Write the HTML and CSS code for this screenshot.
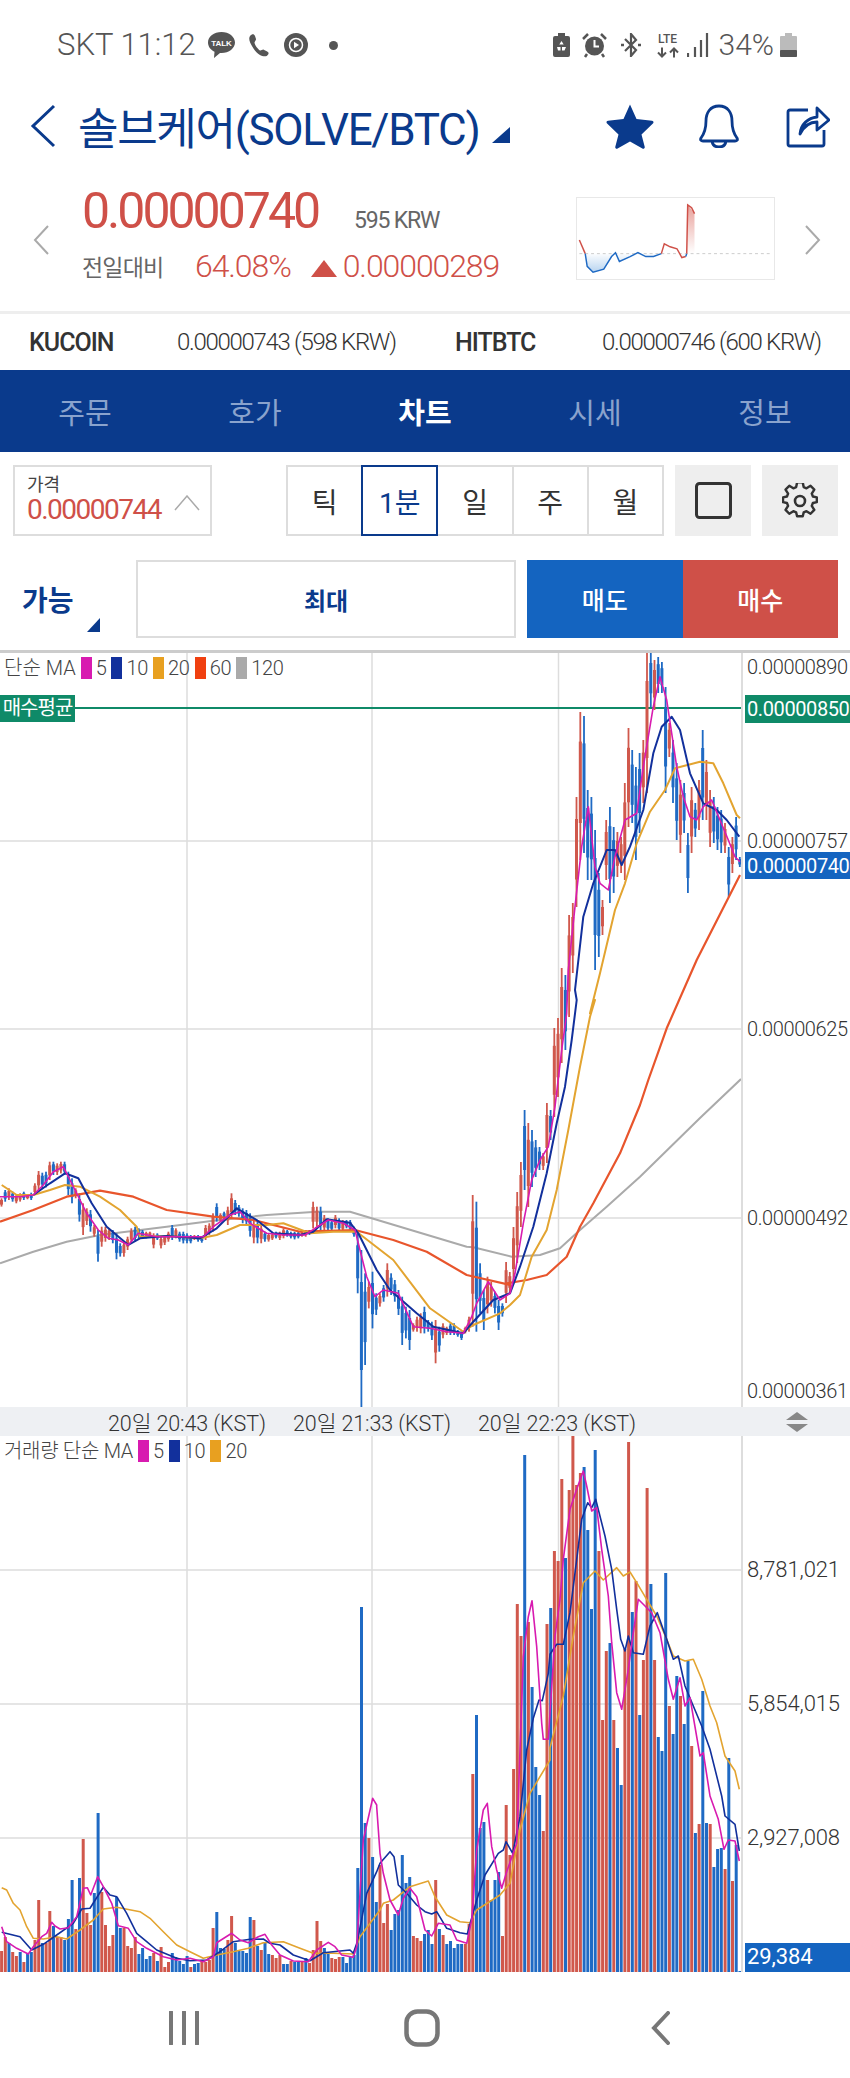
FILE: index.html
```html
<!DOCTYPE html>
<html lang="ko">
<head>
    <meta charset="UTF-8">
    <meta name="viewport" content="width=device-width, initial-scale=1.0">
    <title>솔브케어 차트</title>
    <link rel="stylesheet" href="styles.css">
</head>
<body>
    <div class="status-bar">
        <div class="status-left">
            <span class="status-text">SKT 11:12</span>
            <svg class="ic-talk" viewBox="0 0 27 26"><path d="M13.5 0C6 0 0 4.500 0 10.500c0 4 2.600 7.400 6.500 9.200L6 26l6-5.100c.5 0 1 .1 1.500.1C21 21 27 16.300 27 10.500S21 0 13.500 0z" fill="#555"/><text x="13.500" y="14" class="talk-label">TALK</text></svg>
            <svg class="ic-phone" viewBox="0 0 22 24"><path d="M2 3c2-2.500 4-2.500 5 0l1 3c.4 1.200-1.500 2.500-1.500 3.500 0 2 3.500 7 5.500 8 1 .5 2.500-1.300 3.700-.8l3.500 1.800c2 1 1.800 3-.5 4.500C16 24 10 23 5.500 15.500 1 9 .5 5 2 3z" fill="#555"/></svg>
            <svg class="ic-play" viewBox="0 0 24 24"><circle cx="12" cy="12" r="12" fill="#555"/><circle cx="12" cy="12" r="6.500" fill="none" stroke="#fff" stroke-width="1.500"/><path d="M10 8.800l5 3.200-5 3.200z" fill="#fff"/></svg>
            <span class="status-dot"></span>
        </div>
        <div class="status-right">
            <svg class="ic-batt-save" viewBox="0 0 17 24"><path d="M5 0h7v3h3a2 2 0 0 1 2 2v17a2 2 0 0 1-2 2H2a2 2 0 0 1-2-2V5a2 2 0 0 1 2-2h3z" fill="#555"/><path d="M8.500 8l2.200 3.500h-4.400zM4 14h3.500v3.500H5zM13 14l-1.500 3.500H9V14z" fill="#fff"/></svg>
            <svg class="ic-alarm" viewBox="0 0 25 25"><circle cx="12.500" cy="13" r="9.500" fill="#555"/><path d="M12.500 7v6.500H17" fill="none" stroke="#fff" stroke-width="2"/><path d="M1 6l5-5M24 6l-5-5M5 21l-2 3M20 21l2 3" stroke="#555" stroke-width="2.500"/></svg>
            <svg class="ic-bt" viewBox="0 0 22 24"><path d="M5 6l11 11-5 6V1l5 6L5 18" fill="none" stroke="#555" stroke-width="2.200"/><path d="M1 12h3M18 12h3" stroke="#555" stroke-width="2.500"/></svg>
            <div class="lte">
                <span class="lte-label">LTE</span>
                <svg class="ic-arrows" viewBox="0 0 24 10"><path d="M6 0v9M2 5l4 4 4-4M18 10V1M14 5l4-4 4 4" fill="none" stroke="#555" stroke-width="2"/></svg>
            </div>
            <svg class="ic-signal" viewBox="0 0 22 24"><path d="M1 20v4M8 14v10M14 7v17M20 0v24" stroke="#555" stroke-width="2.200"/></svg>
            <span class="status-text">34%</span>
            <svg class="ic-battery" viewBox="0 0 17 24"><path d="M5 0h7v3h4a1 1 0 0 1 1 1v19a1 1 0 0 1-1 1H1a1 1 0 0 1-1-1V4a1 1 0 0 1 1-1h4z" fill="#bbb"/><rect y="17" width="17" height="7" rx="1" fill="#555"/></svg>
        </div>
    </div>

    <header class="title-row">
        <svg class="back-arrow" viewBox="0 0 26 44"><path d="M24 2L3 22l21 20" fill="none" stroke="#0a3a8c" stroke-width="3"/></svg>
        <h1 class="coin-name">솔브케어(SOLVE/BTC)</h1>
        <span class="corner-tri title-tri"></span>
        <svg class="ic-star" viewBox="0 0 48 46"><path d="M24 1.500l6.500 14.500 15.500 1.800c1.500.2 2 1.800.9 2.800L35.500 31.500l3.200 12.200c.4 1.500-1 2.500-2.300 1.800L24 38.500l-12.400 7c-1.300.7-2.700-.3-2.300-1.800l3.200-12.200L1.100 20.600c-1.100-1-.6-2.600.9-2.800L17.500 16z" fill="#0a3a8c"/></svg>
        <svg class="ic-bell" viewBox="0 0 42 44"><path d="M21 2C12 2 8 9 8 17c0 9-2 13-5 17-1 2 0 3 2 3h32c2 0 3-1 2-3-3-4-5-8-5-17 0-8-4-15-13-15zM14 37c.5 4 3.500 6 7 6s6.500-2 7-6" fill="none" stroke="#0a3a8c" stroke-width="2.800"/></svg>
        <svg class="ic-share" viewBox="0 0 44 44"><path d="M22 6H4a2 2 0 0 0-2 2v32a2 2 0 0 0 2 2h32a2 2 0 0 0 2-2V26" fill="none" stroke="#0a3a8c" stroke-width="2.800"/><path d="M14 30c1-10 8-16 17-17V4l12 12-12 10v-8c-7 0-13 4-17 12z" fill="#fff" stroke="#0a3a8c" stroke-width="2.800" stroke-linejoin="round"/></svg>
    </header>

    <section class="quote">
        <svg class="side-arrow" viewBox="0 0 16 30"><path d="M15 1L2 15l13 14" fill="none" stroke="#aaa" stroke-width="2"/></svg>
        <div class="quote-main">
            <div class="quote-top">
                <span class="last-price">0.00000740</span>
                <span class="krw">595 KRW</span>
            </div>
            <div class="quote-bottom">
                <span class="change-label">전일대비</span>
                <span class="change-rate">64.08%</span>
                <span class="up-tri"></span>
                <span class="change-amount">0.00000289</span>
            </div>
        </div>
        <svg class="spark" viewBox="576 197 199 83">
            <defs>
                <linearGradient id="sparkRed" x1="0" y1="0" x2="0" y2="1"><stop offset="0" stop-color="#e8a09a"/><stop offset="1" stop-color="#fff"/></linearGradient>
                <linearGradient id="sparkBlue" x1="0" y1="1" x2="0" y2="0"><stop offset="0" stop-color="#b8d4f0"/><stop offset="1" stop-color="#fff"/></linearGradient>
            </defs>
            <path d="M583 254L585 267 591 273 602 270 610 257 614 253 618 262 629 257 637 253 645 257 653 257 661 254 682 254 682 258 686 257 687 254z" fill="url(#sparkBlue)"/>
            <path d="M687 254L688 204 695 213 695 254z" fill="url(#sparkRed)"/>
            <path d="M577 254H775" stroke="#ccc" stroke-dasharray="3 3"/>
            <path d="M577 240L583 254" fill="none" stroke="#cf5048" stroke-width="1.500"/>
            <path d="M583 254L585 267 591 273 602 270 610 257 614 253 618 262 629 257 637 253 645 257 653 257 661 254" fill="none" stroke="#1f6ac4" stroke-width="1.500"/>
            <path d="M661 254L664 244 670 247 677 249 682 258 686 257" fill="none" stroke="#cf5048" stroke-width="1.500"/>
            <path d="M686 257L687 254" fill="none" stroke="#1f6ac4" stroke-width="1.500"/>
            <path d="M687 254L688 204 692 207 695 213" fill="none" stroke="#cf5048" stroke-width="1.500"/>
        </svg>
        <svg class="side-arrow side-next" viewBox="0 0 16 30"><path d="M1 1l13 14L1 29" fill="none" stroke="#aaa" stroke-width="2"/></svg>
    </section>

    <section class="exchanges">
        <strong class="ex-name">KUCOIN</strong>
        <span class="ex-price">0.00000743 (598 KRW)</span>
        <strong class="ex-name">HITBTC</strong>
        <span class="ex-price">0.00000746 (600 KRW)</span>
    </section>

    <nav class="tabs">
        <span class="tab">주문</span>
        <span class="tab">호가</span>
        <span class="tab active">차트</span>
        <span class="tab">시세</span>
        <span class="tab">정보</span>
    </nav>

    <section class="controls">
        <div class="price-box">
            <div>
                <div class="price-label">가격</div>
                <div class="price-value">0.00000744</div>
            </div>
            <svg class="ic-up" viewBox="0 0 26 16"><path d="M1 15L13 1l12 14" fill="none" stroke="#aaa" stroke-width="1.500"/></svg>
        </div>
        <div class="periods">
            <span class="period">틱</span>
            <span class="period selected">1분</span>
            <span class="period">일</span>
            <span class="period">주</span>
            <span class="period">월</span>
        </div>
        <div class="icon-btn">
            <svg class="ic-square" viewBox="0 0 37 37"><rect x="1.500" y="1.500" width="34" height="34" rx="3" fill="none" stroke="#333" stroke-width="3"/></svg>
        </div>
        <div class="icon-btn">
            <svg class="ic-gear" viewBox="0 0 36 36"><path d="M15 2h6l1 5 3 1.300 4.300-2.700 4 4.200L30.600 14l1.200 3 4.200 1v5l-4.200 1-1.200 3 2.700 4.200-4 4.200-4.300-2.700-3 1.300-1 4h-6l-1-4-3-1.300-4.300 2.700-4-4.200L5.400 27l-1.200-3L0 23v-5l4.200-1 1.200-3-2.700-4.200 4-4.200L11 8.300 14 7z" transform="translate(1 -2.500) scale(.94)" fill="none" stroke="#333" stroke-width="2.600" stroke-linejoin="round"/><circle cx="18" cy="18" r="5" fill="none" stroke="#333" stroke-width="2.600"/></svg>
        </div>
    </section>

    <section class="order-row">
        <div class="avail">가능<span class="corner-tri avail-tri"></span></div>
        <div class="max-btn">최대</div>
        <div class="side-btns">
            <span class="side-btn sell">매도</span>
            <span class="side-btn buy">매수</span>
        </div>
    </section>

    <section class="chart price-chart">
        <svg id="priceSvg" class="chart-svg" viewBox="0 653 741 754"></svg>
        <div class="legend">
            <span class="legend-name">단순 MA</span>
            <i class="swatch c5"></i><span>5</span>
            <i class="swatch c10"></i><span>10</span>
            <i class="swatch c20"></i><span>20</span>
            <i class="swatch c60"></i><span>60</span>
            <i class="swatch c120"></i><span>120</span>
        </div>
        <span class="avg-tag">매수평균</span>
        <div class="axis-line"></div>
        <span class="axis-label p890">0.00000890</span>
        <span class="axis-label axis-box green p850">0.00000850</span>
        <span class="axis-label p757">0.00000757</span>
        <span class="axis-label axis-box blue p740">0.00000740</span>
        <span class="axis-label p625">0.00000625</span>
        <span class="axis-label p492">0.00000492</span>
        <span class="axis-label p361">0.00000361</span>
    </section>

    <div class="time-axis">
        <span class="time-label">20일 20:43 (KST)</span>
        <span class="time-label">20일 21:33 (KST)</span>
        <span class="time-label">20일 22:23 (KST)</span>
        <svg class="ic-resize" viewBox="0 0 24 20"><path d="M12 0l11 8H1zM1 12h22l-11 8z" fill="#888"/></svg>
    </div>

    <section class="chart volume-chart">
        <svg id="volumeSvg" class="chart-svg" viewBox="0 1436 741 536"></svg>
        <div class="legend legend-vol">
            <span class="legend-name">거래량 단순 MA</span>
            <i class="swatch c5"></i><span>5</span>
            <i class="swatch c10"></i><span>10</span>
            <i class="swatch c20"></i><span>20</span>
        </div>
        <div class="axis-line"></div>
        <span class="axis-label vol-label v1">8,781,021</span>
        <span class="axis-label vol-label v2">5,854,015</span>
        <span class="axis-label vol-label v3">2,927,008</span>
        <span class="axis-label vol-label axis-box blue v4">29,384</span>
    </section>

    <div class="nav-bar">
        <svg class="ic-recent" viewBox="0 0 32 34"><path d="M3 1v32M16 1v32M29 1v32" stroke="#777" stroke-width="4" stroke-linecap="round"/></svg>
        <svg class="ic-home" viewBox="0 0 36 38"><rect x="2.500" y="2.500" width="31" height="33" rx="11" fill="none" stroke="#777" stroke-width="4.500"/></svg>
        <svg class="ic-back" viewBox="0 0 19 34"><path d="M17 2L3 17l14 15" fill="none" stroke="#777" stroke-width="4" stroke-linecap="round"/></svg>
    </div>

    <script src="chart.js"></script>
</body>
</html>
```

FILE: styles.css
```css
* {
    box-sizing: border-box;
}

body {
    font-family: Roboto, "Noto Sans CJK KR", sans-serif;
    background-color: #fff;
    color: #333;
    margin: 0;
    padding: 0;
    width: 850px;
    height: 2078px;
    overflow: hidden;
}

/* status bar */
.status-bar {
    height: 80px;
    padding: 32px 53px 0 57px;
    display: flex;
    justify-content: space-between;
    align-items: flex-start;
}

.status-left, .status-right {
    display: flex;
    align-items: center;
    height: 26px;
}

.status-text {
    font-size: 31px;
    font-weight: 300;
    color: #555;
    line-height: 26px;
    white-space: nowrap;
}

.ic-talk { width: 27px; height: 26px; margin-left: 12px; }
.talk-label { font: bold 8px "Liberation Sans", sans-serif; fill: #fff; text-anchor: middle; }
.ic-phone { width: 22px; height: 24px; margin-left: 13px; }
.ic-play { width: 24px; height: 24px; margin-left: 14px; }
.status-dot { width: 9px; height: 9px; border-radius: 50%; background: #555; margin-left: 21px; }
.ic-batt-save { width: 17px; height: 24px; }
.ic-alarm { width: 25px; height: 25px; margin-left: 12px; }
.ic-bt { width: 22px; height: 24px; margin-left: 13px; }
.lte { width: 24px; margin-left: 14px; display: flex; flex-direction: column; align-items: center; }
.lte-label { font-size: 12px; font-weight: 500; color: #555; line-height: 12px; }
.ic-arrows { width: 24px; height: 11px; margin-top: 2px; }
.ic-signal { width: 22px; height: 24px; margin-left: 7px; }
.status-right .status-text { margin-left: 10px; font-size: 30px; }
.ic-battery { width: 17px; height: 24px; margin-left: 6px; }

/* title */
.title-row {
    height: 92px;
    position: relative;
    display: flex;
    align-items: center;
    padding-left: 30px;
}

.back-arrow { width: 26px; height: 44px; }

.coin-name {
    margin: 0 0 0 22px;
    font-size: 44px;
    font-weight: 400;
    color: #0a3a8c;
    letter-spacing: -1.3px;
    white-space: nowrap;
}

.corner-tri {
    width: 0;
    height: 0;
    display: block;
    border-style: solid;
    border-width: 0 0 16px 18px;
    border-color: transparent transparent #0a3a8c transparent;
}

.title-tri { margin: 18px 0 0 13px; }
.ic-star { width: 48px; height: 46px; margin-left: 96px; }
.ic-bell { width: 42px; height: 44px; margin-left: 44px; }
.ic-share { width: 44px; height: 44px; margin-left: 46px; }

/* quote */
.quote {
    height: 142px;
    border-bottom: 3px solid #eee;
    display: flex;
    align-items: flex-start;
    padding-left: 33px;
    position: relative;
}

.side-arrow { width: 16px; height: 30px; margin-top: 53px; flex: none; }
.side-next { margin-left: 30px; }

.quote-main {
    width: 494px;
    margin-left: 33px;
    padding-top: 12px;
}

.quote-top { display: flex; align-items: baseline; height: 55px; }

.last-price {
    font-size: 50px;
    font-weight: 400;
    color: #cf5048;
    letter-spacing: -3px;
    line-height: 55px;
}

.krw {
    font-size: 23px;
    color: #666;
    margin-left: 36px;
    letter-spacing: -1.2px;
}

.quote-bottom { display: flex; align-items: center; height: 42px; margin-top: 6px; }
.change-label { font-size: 23px; color: #666; letter-spacing: -.8px; width: 113px; white-space: nowrap; }

.change-rate, .change-amount {
    font-size: 32px;
    font-weight: 300;
    color: #cf5048;
    letter-spacing: -1.1px;
}

.up-tri {
    width: 0;
    height: 0;
    margin: 4px 6px 0 20px;
    border-style: solid;
    border-width: 0 13.500px 17px 13.500px;
    border-color: transparent transparent #cf5048 transparent;
}

.spark {
    width: 199px;
    height: 83px;
    margin-top: 25px;
    border: 1px solid #e8e8e8;
    flex: none;
}

/* exchange prices */
.exchanges {
    height: 56px;
    display: grid;
    grid-template-columns: 148px 278px 147px 1fr;
    align-items: center;
    padding: 0 0 0 29px;
}

.ex-name { font-size: 25px; font-weight: 500; color: #333; letter-spacing: -1px; }
.ex-price { font-size: 24px; font-weight: 300; color: #333; letter-spacing: -1.300px; white-space: nowrap; }

/* tabs */
.tabs {
    height: 82px;
    background-color: #0a3a8c;
    display: grid;
    grid-template-columns: repeat(5, 170px);
    align-items: center;
}

.tab { text-align: center; font-size: 29px; color: #8aa3cd; }
.tab.active { color: #fff; font-weight: 700; }

/* price box and period buttons */
.controls {
    display: flex;
    height: 71px;
    margin-top: 13px;
    padding-left: 13px;
}

.price-box {
    width: 199px;
    border: 2px solid #ddd;
    padding: 8px 10px 0 12px;
    display: flex;
    justify-content: space-between;
    align-items: flex-start;
}

.price-label { font-size: 18px; line-height: 20px; color: #444; }
.price-value { font-size: 28px; line-height: 30px; color: #cf5048; letter-spacing: -1.500px; white-space: nowrap; }
.ic-up { width: 26px; height: 16px; margin-top: 20px; }

.periods {
    display: flex;
    width: 378px;
    margin-left: 74px;
    border: 2px solid #ddd;
}

.period {
    flex: 1;
    display: flex;
    align-items: center;
    justify-content: center;
    font-size: 28px;
    color: #333;
    border-left: 2px solid #ddd;
}

.period:first-child { border-left: none; }

.period.selected {
    margin: -2px 0;
    border: 2px solid #0a3a8c;
    color: #0a3a8c;
}

.period.selected + .period { border-left: none; }

.icon-btn {
    width: 76px;
    margin-left: 11px;
    background-color: #eee;
    display: flex;
    align-items: center;
    justify-content: center;
}

.ic-square { width: 37px; height: 37px; }
.ic-gear { width: 36px; height: 36px; }

/* order row */
.order-row {
    display: flex;
    height: 78px;
    margin-top: 24px;
}

.avail {
    width: 136px;
    position: relative;
    padding: 22px 0 0 22px;
    font-size: 28px;
    font-weight: 700;
    color: #0a3a8c;
    line-height: 40px;
}

.avail-tri {
    position: absolute;
    left: 87px;
    top: 58px;
    border-width: 0 0 14px 13px;
}

.max-btn {
    width: 380px;
    border: 2px solid #ddd;
    display: flex;
    align-items: center;
    justify-content: center;
    font-size: 24px;
    font-weight: 700;
    color: #0a3a8c;
}

.side-btns { display: flex; margin-left: 11px; width: 311px; }

.side-btn {
    flex: 1;
    display: flex;
    align-items: center;
    justify-content: center;
    font-size: 25px;
    font-weight: 500;
    color: #fff;
}

.sell { background-color: #1464c0; }
.buy { background-color: #cf5048; }

/* charts */
.chart { position: relative; overflow: hidden; }

.price-chart {
    height: 757px;
    margin-top: 12px;
    border-top: 3px solid #ccc;
}

.volume-chart { height: 536px; }

.chart-svg {
    display: block;
    width: 741px;
    height: 100%;
}

.axis-line {
    position: absolute;
    left: 741px;
    top: 0;
    bottom: 0;
    width: 2px;
    background-color: #ddd;
}

.legend {
    position: absolute;
    left: 4px;
    top: 4px;
    display: flex;
    align-items: center;
    gap: 4px;
    font-size: 20px;
    font-weight: 300;
    color: #444;
    letter-spacing: -.3px;
    line-height: 22px;
}

.swatch { width: 11px; height: 22px; display: block; margin-left: 1px; }
.legend-name { letter-spacing: 0; white-space: nowrap; }
.legend-vol .legend-name { letter-spacing: -.3px; }
.c5 { background-color: #d81bb0; }
.c10 { background-color: #12309c; }
.c20 { background-color: #e8a020; }
.c60 { background-color: #f04010; }
.c120 { background-color: #aaa; }

.avg-tag {
    position: absolute;
    left: 0;
    top: 42px;
    width: 75px;
    height: 27px;
    background-color: #0f8a68;
    color: #fff;
    font-size: 20px;
    line-height: 27px;
    text-align: center;
    letter-spacing: -1px;
    white-space: nowrap;
}

.axis-label {
    position: absolute;
    left: 747px;
    font-size: 20px;
    font-weight: 300;
    color: #333;
    letter-spacing: -.4px;
    line-height: 28px;
    white-space: nowrap;
}

.axis-box {
    left: 745px;
    width: 105px;
    padding-left: 2px;
    color: #fff;
    font-weight: 400;
    overflow: hidden;
}

.vol-label { font-size: 22px; letter-spacing: -.1px; }

.green { background-color: #0f8a68; }
.blue { background-color: #1464c0; }

/* tops are measured from the panel's own top edge */
.p890 { top: 0; }
.p850 { top: 42px; }
.p757 { top: 174px; }
.p740 { top: 199px; height: 27px; }
.p625 { top: 362px; }
.p492 { top: 551px; }
.p361 { top: 724px; }
.v1 { top: 120px; }
.v2 { top: 254px; }
.v3 { top: 388px; }
.v4 { top: 507px; height: 29px; }

.time-axis {
    height: 29px;
    background-color: #eef0f3;
    display: flex;
    align-items: center;
    padding-left: 108px;
    gap: 27px;
    position: relative;
}

.time-label {
    width: 158px;
    font-size: 21.500px;
    font-weight: 300;
    color: #333;
    letter-spacing: -.1px;
    white-space: nowrap;
}

.ic-resize { width: 24px; height: 20px; margin-left: 122px; }

/* bottom nav */
.nav-bar {
    height: 106px;
    display: grid;
    grid-template-columns: 236px 247px 1fr;
    align-items: center;
    padding: 6px 0 0 168px;
}

.ic-recent { width: 32px; height: 34px; }
.ic-home { width: 36px; height: 38px; }
.ic-back { width: 19px; height: 34px; }
```

FILE: chart.js
```js
// candle and volume data were read off at 3x, so most series go through scale()
const STEP = 3.71;
const RED = '#d0584c';
const BLUE = '#1f6ac4';

function scale(x0, y0, pts) {
    return pts.map(function(p) { return [x0 + p[0] / 3, y0 + p[1] / 3]; });
}

function line(pts, color, width) {
    const d = pts.map(function(p) { return p[0].toFixed(1) + ' ' + p[1].toFixed(1); }).join(' L');
    return '<path d="M' + d + '" fill="none" stroke="' + color + '" stroke-width="' + width + '" stroke-linejoin="round"/>';
}

function grid(xs, ys, top, bottom) {
    let out = '';
    xs.forEach(function(x) { out += '<path d="M' + x + ' ' + top + 'V' + bottom + '" stroke="#ddd" stroke-width="1.5"/>'; });
    ys.forEach(function(y) { out += '<path d="M0 ' + y + 'H741" stroke="#ddd" stroke-width="1.5"/>'; });
    return out;
}

// ---- price chart: [hi, lo], a negative hi means a blue candle ----
const candlesA = [
    [295,320],[-270,305],[265,300],[-275,305],[285,310],[280,305],[-275,300],[283,298],[-278,300],[250,285],
    [213,270],[-218,265],[-215,262],[185,240],[-185,225],[190,225],[185,220],[-185,225],[-215,285],[-235,310],
    [265,295],[-280,365],[310,405],[325,375],[-330,395],[375,410],[-390,485],[380,440],[380,425],[385,420],
    [-390,430],[-400,478],[-430,470],[425,470],[410,450],[385,430],[-380,425],[-385,415],[-390,415],[395,415],
    [395,410],[400,445],[-400,420],[410,445],[405,435],[395,425],[-375,420],[385,415],[-395,425],[-395,430],
    [-400,430],[-405,430],[405,420],[-405,425],[-408,428],[375,420],[370,405],[340,395],[-310,365],[340,365],
    [-335,360],[320,375],[280,355],[-300,345],[-315,350],[-325,370],[-330,375],[-340,410],[360,430],[-360,430],
    [375,430],[-395,425],[400,425],[400,420],[-395,415],[395,420],[385,415],[-390,410],[-395,415],[-395,418],
    [-395,415],[395,410],[390,410],[-390,405],[305,385],[320,380],[-320,395],[345,395],[-355,395],[-360,395],
    [345,385],[-355,395],[360,395],[-360,385],[-360,395],[-380,410],[-400,580],[-450,930],[-520,795],[545,625],
    [-515,685],[-580,645],[580,620],[-555,605],[490,590],[-520,585],[-540,605],[-570,645],[-590,735],[-620,715],
    [-630,750],[670,695],[650,695],[640,700],[-620,700],[-660,695],[-665,720],[660,790],[-680,755],[670,715],
    [680,705],[-670,705],[-670,705],[-690,710],[-695,720],[680,700],[650,695],[285,680],[-305,695],[-490,640],
    [-570,690],[530,640],[545,620],[-575,640],[-600,690],[-610,650]
].map(function(c) {
    const s = c[0] < 0 ? -1 : 1;
    return [s * (1100 + Math.abs(c[0]) / 3), 1100 + c[1] / 3];
});

const candlesB = [
    [1262,1303],[1272,1293],[1227,1283],[1192,1263],[1162,1227],[-1110,1190],[1123,1207],[-1130,1187],[-1140,1177],[-1147,1170],
    [1153,1170],[1103,1163],[-1110,1140],[1028,1117],[1018,1097],[968,1063],[-975,1050],[915,1017],[903,973],[797,907],
    [712,860],[-716,853],[-790,880],[-797,880],[-830,970],[-873,957],[900,935],[820,880],[-807,903],[-827,893],
    [832,877],[837,873],[783,880],[728,827],[-750,823],[-767,860],[-753,833],[740,803],[653,793],[-652,707],
    [660,710],[-657,693],[-662,693],[-687,793],[723,757],[-740,803],[-763,840],[780,853],[-783,833],[-833,893],
    [787,853],[-803,837],[780,830],[-730,820],[760,820],[790,847],[-797,843],[-807,850],[-810,853],[823,853],
    [-847,897],[837,873],[-817,860],[-857,867]
];

const priceMA = {
    ma120: scale(0, 1100, [[0,490],[100,455],[200,425],[300,405],[500,380],[640,362],[800,345],[950,335],[1050,335],[1200,380],[1400,440]])
        .concat(scale(440, 1000, [[100,742],[215,770],[300,765],[360,745],[420,690],[500,620],[600,530]]))
        .concat([[700,1118],[741,1079]]),
    ma60: scale(0, 1100, [[0,365],[100,330],[200,290],[300,272],[400,290],[500,330],[640,350],[760,360],[900,395],[1065,390],[1180,420],[1280,455],[1400,525],[1530,555]])
        .concat(scale(440, 1000, [[200,850],[260,840],[320,825],[380,770],[420,680],[460,610],[540,460],[600,315]]))
        .concat(scale(500, 640, [[445,1320],[500,1165],[590,960],[720,705]])),
    ma20: scale(0, 1100, [[5,255],[50,285],[100,285],[150,270],[195,255],[240,260],[300,290],[360,330],[410,380],[420,410],[500,408],[600,415],[650,405],[720,375],[800,375],[850,370],[930,400],[1000,395],[1070,395],[1180,480],[1290,625],[1390,695],[1420,675],[1500,640]])
        .concat(scale(440, 1000, [[210,915],[240,885],[275,770],[320,690],[350,570],[385,390],[420,200],[450,50],[465,0]]))
        .concat(scale(500, 640, [[270,1120],[300,1000],[345,810],[375,730],[410,610],[450,515],[495,450],[525,385],[600,365],[640,370],[670,430],[710,525],[720,535]])),
    ma10: scale(0, 1100, [[100,285],[150,250],[195,220],[235,235],[275,310],[320,380],[385,435],[420,415],[500,408],[600,415],[650,385],[710,325],[770,360],[820,400],[900,405],[940,395],[980,358],[1050,368],[1075,400],[1130,510],[1170,570],[1250,640],[1300,680],[1390,700],[1420,665],[1480,600],[1530,580]])
        .concat(scale(440, 1000, [[240,800],[280,680],[320,520],[350,370],[375,260],[395,120],[410,0]]))
        .concat(scale(500, 640, [[225,1050],[250,830],[280,730],[320,630],[345,630],[365,675],[390,620],[430,510],[460,340],[485,260],[515,230],[540,270],[570,400],[610,490],[650,510],[680,540],[718,590]])),
    ma5: scale(0, 1100, [[0,290],[60,290],[100,285],[130,255],[160,215],[190,200],[225,270],[260,340],[295,390],[325,415],[355,420],[385,435],[415,400],[470,410],[560,410],[610,410],[640,380],[690,345],[720,335],[750,370],[800,400],[850,405],[915,405],[945,385],[985,360],[1030,370],[1065,390],[1080,450],[1100,530],[1125,590],[1150,570],[1195,580],[1240,680],[1290,685],[1340,695],[1390,700],[1415,650],[1430,610],[1465,545],[1500,600],[1530,580]])
        .concat(scale(440, 1000, [[225,820],[250,670],[275,540],[300,480],[325,440],[345,320],[365,150],[380,40]]))
        .concat(scale(500, 640, [[205,990],[225,800],[245,620],[265,500],[285,680],[300,730],[325,750],[345,650],[375,540],[410,520],[430,380],[460,200],[480,110],[500,180],[530,380],[550,470],[570,530],[590,540],[610,500],[635,480],[660,540],[685,600],[705,650],[720,665]]))
};

function drawCandles(list) {
    let out = '';
    list.forEach(function(c, i) {
        const x = 1.5 + STEP * i;
        const hi = Math.abs(c[0]);
        const lo = c[1];
        const color = c[0] < 0 ? BLUE : RED;
        const span = lo - hi;
        out += '<rect x="' + (x - 0.9).toFixed(1) + '" y="' + hi.toFixed(1) + '" width="1.8" height="' + span.toFixed(1) + '" fill="' + color + '"/>';
        out += '<rect x="' + (x - 1.5).toFixed(1) + '" y="' + (hi + span * 0.2).toFixed(1) + '" width="3" height="' + (span * 0.55).toFixed(1) + '" fill="' + color + '"/>';
    });
    return out;
}

const priceSvg = document.getElementById('priceSvg');
priceSvg.innerHTML =
    grid([187, 372, 558.5], [841, 1029, 1218], 653, 1407) +
    '<path d="M0 708H741" stroke="#0f8a68" stroke-width="2"/>' +
    line(priceMA.ma120, '#aaa', 2) +
    drawCandles(candlesA.concat(candlesB)) +
    line(priceMA.ma60, '#e8552c', 2.2) +
    line(priceMA.ma20, '#e3a430', 2) +
    line(priceMA.ma10, '#12309c', 2) +
    line(priceMA.ma5, '#d81bb0', 1.6);

// ---- volume chart: bar heights, negative means blue ----
const volumes = [
    21,35,-29,20,16,-20,10,-19,-20,32,72,-29,29,61,-46,35,35,-32,-53,-92,
    43,-94,133,59,47,-79,-159,80,47,26,37,-75,-44,44,26,24,35,-18,-24,-13,
    -16,19,-11,25,5,10,-19,-15,-11,-8,-16,5,-8,-9,12,10,12,44,-60,-24,
    -23,32,56,-29,-21,-21,-19,-55,52,-26,22,-30,-18,17,14,17,-8,-8,11,-10,
    -10,11,-14,9,22,51,31,-24,-19,14,13,15,-15,-9,-15,-17,-104,-365,-149,134,
    -115,-70,107,49,68,-42,-58,-62,-117,-89,-95,36,34,31,-38,-42,-28,92,-43,37,
    -28,-31,-24,-28,-28,28,48,198,-257,-144,-150,92,-72,-92,-100,36,167,117,203,368,
    336,-517,350,-285,-205,-177,141,348,-364,421,411,493,-414,482,536,487,499,-505,-442,-363,
    -522,421,252,321,-329,252,-224,-187,323,530,-360,391,-257,312,484,-388,312,-235,-221,-399,
    266,-238,-296,276,-248,-311,226,-139,148,-281,-149,148,-105,-123,-124,103,-214,91,-127,-1
];

const volMA = {
    ma20: scale(0, 1760, [[5,383],[20,390],[40,430],[60,450],[80,500],[100,535],[130,537],[170,530],[200,537],[240,510],[280,480],[310,447],[350,442],[420,455],[450,475],[490,515],[530,555],[570,575],[610,595],[650,585],[700,575],[745,565],[790,548],[850,545],[900,565],[940,580],[1000,580],[1060,582],[1080,530],[1140,450]])
        .concat(scale(360, 1590, [[70,940],[100,930],[150,890],[205,873],[225,920],[260,975],[300,995],[330,998],[350,960],[420,915],[450,880],[480,720],[510,610],[570,510]]))
        .concat(scale(550, 1436, [[0,935],[40,780],[70,600],[100,440],[135,405],[160,432],[200,395],[220,420],[240,408],[260,440],[290,490],[320,540],[350,610],[370,660],[405,675],[430,670],[455,730],[480,810],[500,860],[525,960],[555,1005],[568,1060]])),
    ma10: scale(0, 1760, [[5,517],[60,530],[95,570],[130,553],[170,525],[220,490],[245,447],[270,445],[310,382],[330,405],[350,410],[380,460],[410,520],[440,545],[470,570],[530,595],[570,602],[620,600],[660,575],[700,545],[750,538],[790,537],[810,550],[840,555],[880,585],[930,602],[970,578],[1050,570],[1060,580],[1072,545],[1100,400],[1130,335]])
        .concat(scale(360, 1590, [[60,820],[90,785],[102,800],[115,885],[140,910],[170,945],[195,965],[215,972],[230,965],[260,1015],[300,1028],[322,1032],[350,930],[375,855],[415,790],[430,780],[438,755],[458,790],[480,680],[500,480],[520,385],[537,330],[547,332],[565,250]]))
        .concat(scale(550, 1436, [[0,655],[20,625],[40,625],[60,530],[80,370],[95,250],[113,200],[125,215],[137,190],[165,300],[185,400],[200,520],[212,610],[225,645],[235,600],[250,650],[280,655],[300,570],[322,530],[350,610],[370,670],[385,660],[405,750],[430,810],[455,870],[480,940],[515,1080],[525,1140],[555,1165],[568,1245]])),
    ma5: scale(0, 1760, [[5,500],[20,545],[50,565],[85,582],[100,560],[125,530],[140,520],[155,487],[165,498],[180,507],[205,503],[230,470],[250,385],[262,383],[272,405],[293,350],[310,380],[335,430],[355,497],[385,505],[410,545],[440,565],[490,590],[530,600],[570,595],[610,605],[640,590],[650,548],[695,520],[720,540],[745,548],[775,530],[795,523],[815,555],[840,585],[880,603],[925,605],[950,570],[985,547],[1005,560],[1025,585],[1060,592],[1070,560],[1090,240],[1118,115],[1130,135]])
        .concat(scale(360, 1590, [[50,650],[60,790],[70,850],[90,930],[115,975],[130,925],[150,895],[170,920],[195,1020],[215,1038],[235,1000],[270,1005],[290,1050],[320,1060],[335,990],[350,780],[370,660],[382,640],[395,770],[410,840],[425,895],[440,845],[470,760],[490,200],[505,80],[516,32],[530,170],[545,400],[550,448],[565,448]]))
        .concat(scale(550, 1436, [[15,600],[30,490],[40,370],[60,220],[80,160],[100,105],[110,150],[125,225],[140,215],[155,340],[175,480],[185,620],[200,770],[215,820],[235,700],[250,590],[265,490],[285,510],[305,530],[330,590],[355,730],[370,790],[390,725],[405,810],[420,785],[450,960],[460,950],[480,1080],[505,1150],[522,1240],[535,1212],[555,1215],[568,1275]]))
};

function drawBars(list) {
    let out = '';
    list.forEach(function(v, i) {
        const h = Math.abs(v);
        const x = 0.1 + STEP * i;
        out += '<rect x="' + x.toFixed(1) + '" y="' + (1972 - h) + '" width="3" height="' + h + '" fill="' + (v < 0 ? BLUE : RED) + '"/>';
    });
    return out;
}

const volumeSvg = document.getElementById('volumeSvg');
volumeSvg.innerHTML =
    grid([187, 372, 558.5], [1570, 1704, 1838], 1436, 1972) +
    drawBars(volumes) +
    line(volMA.ma20, '#e3a430', 1.6) +
    line(volMA.ma10, '#12309c', 1.6) +
    line(volMA.ma5, '#d81bb0', 1.6);
```
